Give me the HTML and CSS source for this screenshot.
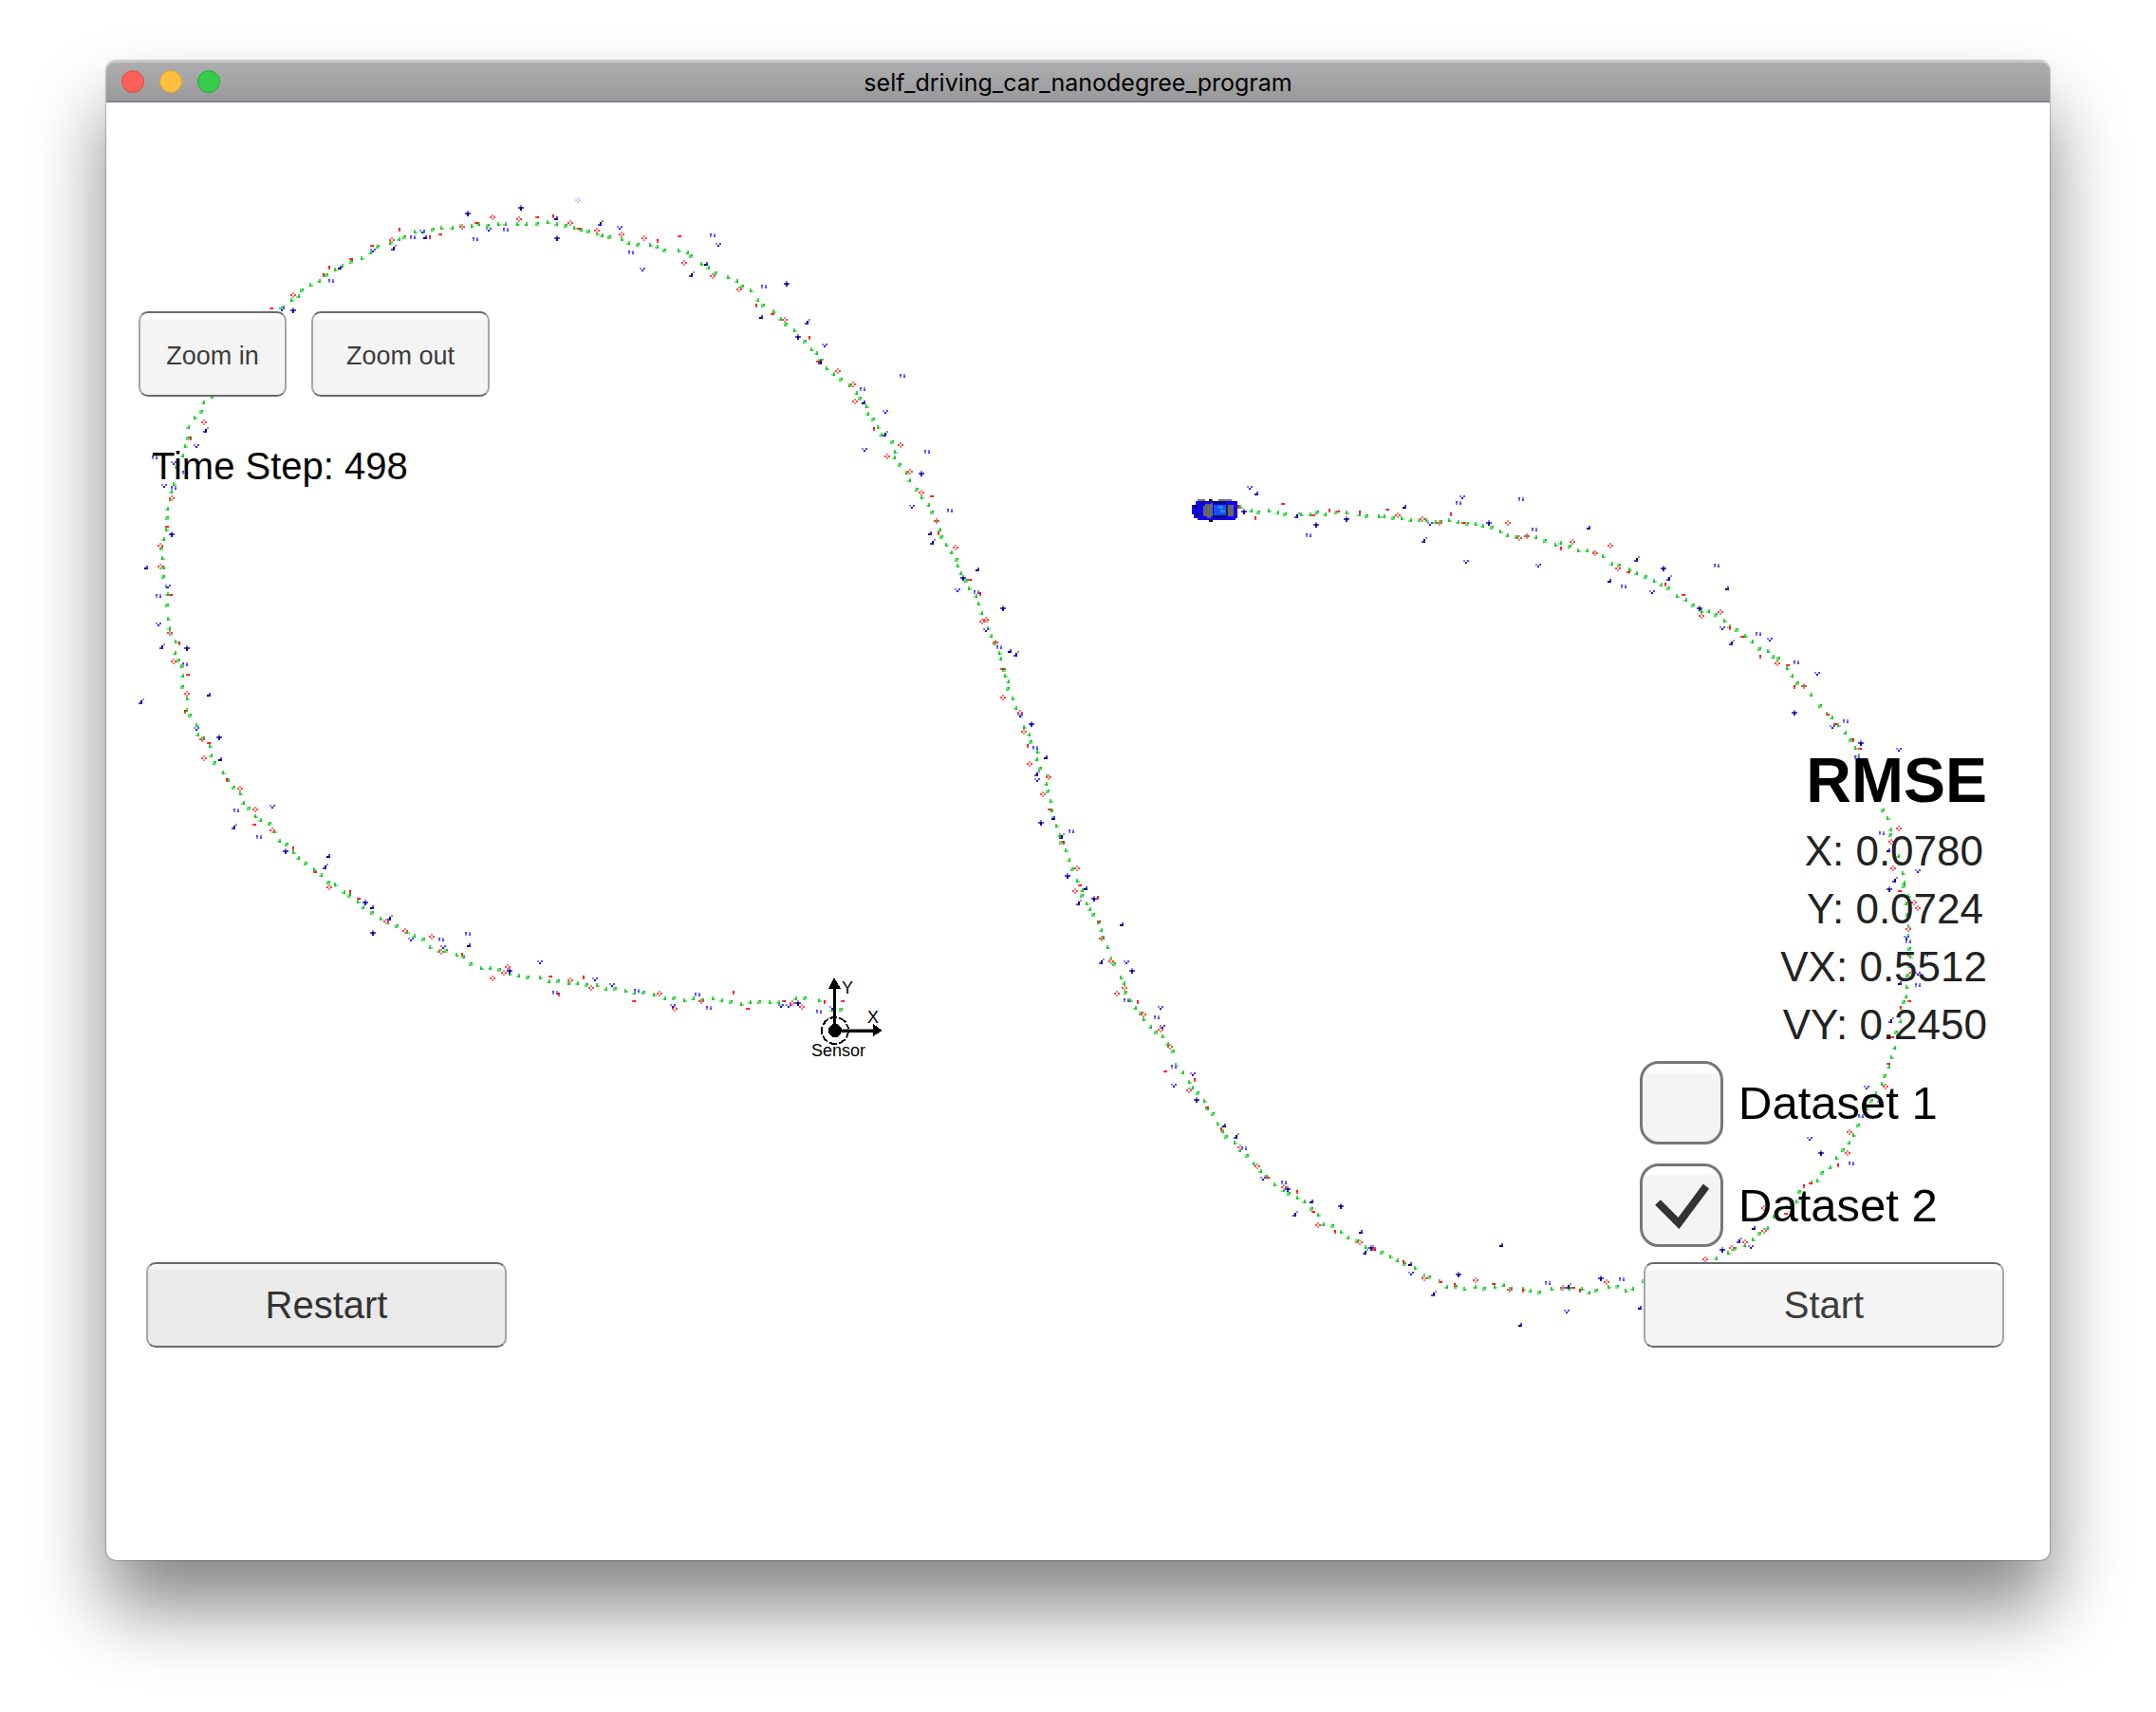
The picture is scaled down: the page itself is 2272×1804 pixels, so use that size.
FILE: index.html
```html
<!DOCTYPE html>
<html lang="en">
<head>
<meta charset="utf-8">
<meta name="viewport" content="width=device-width, initial-scale=1">
<title>self_driving_car_nanodegree_program</title>
<link rel="stylesheet" href="styles.css">
</head>
<body>
<main class="window">
  <header class="titlebar">
    <div class="lights">
      <button class="light light-close" type="button" aria-label="Close"></button>
      <button class="light light-minimize" type="button" aria-label="Minimize"></button>
      <button class="light light-zoom" type="button" aria-label="Full screen"></button>
    </div>
    <h1 class="title">self_driving_car_nanodegree_program</h1>
  </header>

  <section class="stage">
    <svg class="scene" viewBox="112 108 2048 1536" shape-rendering="crispEdges" aria-hidden="true">
      <g id="trace"></g>
      <g class="car">
        <path fill="#777" d="M1262 526h8v2h-8zM1274 526h4v2h-4zM1284 526h14v2h-14zM1262 546h14v2h-14zM1282 546h16v2h-16z"/>
        <path fill="#111" d="M1274 526h3v2h-3zM1274 548h4v2h-4zM1260 528h4v2h-4z"/>
        <path fill="#1005ee" d="M1260 528h44v18h-2v2h-40v-2h-4v-4h-2v-10h4z"/>
        <path fill="#0a0a80" d="M1258 532h4v4h-4zM1260 540h4v4h-4zM1266 528h4v3h-4zM1278 528h14v3h-14zM1278 543h14v3h-14z"/>
        <path fill="#666" d="M1270 531h6v-1h2v14h-2v2h-4v-2h-4v-11h2z"/>
        <path fill="#1450ff" d="M1279 532h13v11h-13z"/>
        <path fill="#2a86ff" d="M1283 533h6v3h-6zM1286 537h5v3h-5z"/>
        <path fill="#667" d="M1294 532h6v12h-6z"/>
        <path fill="#223" d="M1292 532h2v12h-2z"/>
      </g>
      <g class="sensor">
        <circle cx="880" cy="1086" r="14" fill="none" stroke="#000" stroke-width="2" stroke-dasharray="8 2"/>
        <circle cx="880" cy="1086" r="7"/>
        <path d="M878 1040h3v46h-3zM886 1085h36v3h-36zM873 1042l6-12 7 12zM920 1079l10 7-10 6z"/>
        <path fill="#888" d="M888 1084h32v1h-32z"/>
        <text x="887" y="1047">Y</text>
        <text x="914" y="1078">X</text>
        <text x="855" y="1113">Sensor</text>
      </g>
    </svg>

    <div class="side side-left">
      <div class="zoom">
        <button class="btn btn-zoom" type="button">Zoom in</button>
        <button class="btn btn-zoom btn-zoom-out" type="button">Zoom out</button>
      </div>
      <p class="step">Time Step: 498</p>
      <button class="btn btn-main btn-restart" type="button">Restart</button>
    </div>

    <div class="side side-right">
      <section class="rmse">
        <h2 class="rmse-title">RMSE</h2>
        <p class="rmse-row rmse-pos">X: 0.0780</p>
        <p class="rmse-row rmse-pos">Y: 0.0724</p>
        <p class="rmse-row">VX: 0.5512</p>
        <p class="rmse-row">VY: 0.2450</p>
      </section>
      <div class="datasets">
        <label class="choice">
          <span class="tick"><input class="box" type="checkbox"></span>
          Dataset 1
        </label>
        <label class="choice">
          <span class="tick">
            <input class="box" type="checkbox" checked>
            <svg class="mark" viewBox="0 0 88 88" aria-hidden="true"><path d="M19 41L41 63L70 24"/></svg>
          </span>
          Dataset 2
        </label>
      </div>
      <button class="btn btn-main" type="button">Start</button>
    </div>
  </section>
</main>
<script src="trace.js"></script>
</body>
</html>
```
FILE: styles.css
```css
* { box-sizing: border-box; }

body {
  margin: 0;
  padding: 64px 112px 160px;
  background: #fff;
  color: #000;
  font-family: "Liberation Sans", Arial, sans-serif;
}

.window {
  border-radius: 10px;
  background: #fff;
  box-shadow: 0 0 2px rgba(0, 0, 0, .7), 0 50px 80px rgba(0, 0, 0, .48);
}

.titlebar {
  display: grid;
  grid-template-columns: 1fr auto 1fr;
  align-items: center;
  height: 44px;
  padding: 0 16px;
  border-top: 2px solid #c9c9cb;
  border-bottom: 2px solid #868488;
  border-radius: 10px 10px 0 0;
  background: linear-gradient(#adadaf, #9a9a9c);
}

.lights { display: flex; gap: 16px; }

.light {
  width: 24px;
  height: 24px;
  padding: 0;
  border: 1px solid;
  border-radius: 50%;
}
.light-close { background: #ff5f5a; border-color: #e04842; }
.light-minimize { background: #ffbf40; border-color: #e0a02c; }
.light-zoom { background: #35cb4b; border-color: #22ac36; }

.title {
  margin: 0;
  padding-top: 2px;
  font: 400 25px/32px Inter, sans-serif;
}

.stage {
  position: relative;
  display: flex;
  justify-content: space-between;
  aspect-ratio: 4 / 3;
  padding: 220px 48px 224px 34px;
}

.scene {
  position: absolute;
  inset: 0;
  width: 100%;
  height: 100%;
}
.sensor { font-size: 18px; }

.side {
  position: relative;
  display: flex;
  flex-direction: column;
}

.zoom { display: flex; gap: 26px; }

.btn {
  height: 90px;
  padding: 0;
  border: 2px solid #6a6a6a;
  border-left-color: #a6a6a6;
  border-right-color: #a6a6a6;
  border-radius: 10px;
  background: linear-gradient(#fff 4px, #f4f4f4 8px);
  color: #3c3c3c;
  font-family: inherit;
  font-size: 40px;
}
.btn-zoom {
  width: 156px;
  padding-top: 4px;
  font-size: 27px;
}
.btn-zoom-out { width: 188px; }
.btn-main { width: 380px; }
.btn-restart {
  margin: auto 0 0 8px;
  background: linear-gradient(#f6f6f6 4px, #eaeaea 8px);
  color: #333;
}

.step {
  margin: 50px 0 0 14px;
  font-size: 40px;
  line-height: 46px;
}

.side-right {
  width: 384px;
  justify-content: flex-end;
  align-items: flex-end;
}

.rmse {
  padding-right: 18px;
  margin-bottom: 8px;
  color: #222;
  text-align: right;
}
.rmse-title {
  margin: 0;
  color: #000;
  font-size: 66px;
  line-height: 88px;
}
.rmse-row {
  margin: 0;
  font-size: 44px;
  line-height: 61px;
}
.rmse-pos { padding-right: 4px; }

.datasets {
  display: flex;
  flex-direction: column;
  gap: 20px;
  width: 100%;
  margin-bottom: 16px;
}
.choice {
  display: flex;
  align-items: center;
  gap: 16px;
  font-size: 49px;
}
.tick { display: grid; width: 88px; height: 88px; }
.box, .mark { grid-area: 1 / 1; width: 88px; height: 88px; }
.box {
  appearance: none;
  margin: 0;
  border: 3px solid #777;
  border-radius: 20px;
  background: linear-gradient(#fff 6px, #f4f4f4 12px);
}
.mark {
  z-index: 1;
  fill: none;
  stroke: #333;
  stroke-width: 8;
  pointer-events: none;
}
```
FILE: trace.js
```js
const sections = [
  { o: [100, 50], s: [3, 3],
    est: "366,1106 345,1126 336,1152 315,1175 297,1205 295,1237 285,1260 276,1290 262,1330 250,1380 240,1405 597,825 622,802 642,786 657,772 680,755 709,738 735,720 757,706 783,694 811,678 840,666 871,648 898,634 930,618 962,608 983,600 1012,586 1038,582 1070,576 1095,574 1128,570 1158,568 1188,564 1215,562 1247,564 1272,558 1300,560",
    ring: "624,780 345,1184 1163,566 1256,535 938,606", red: "563,825 720,722 815,668 741,698 879,628 962,578 1092,591 1058,603 1209,556 303,1240",
    dark: "627,831 771,699 945,630 1181,526 1043,600 348,1206", blue: "592,824 744,735 877,640 1002,597 1037,578 1202,604 1247,572 1296,570 323,1256 188,1294 250,1310 282,1340 218,1382 251,1386" },
  { o: [100, 520], s: [3, 3],
    est: "237,18 232,52 228,82 224,114 218,148 214,175 215,208 216,238 220,268 224,298 229,323 232,354 230,398 234,426 240,444 254,472 252,504 264,528 274,550 281,580 280,617 288,650 293,684 300,707 318,735 329,762 342,776 360,798 371,829 382,857 404,886 423,908 443,930 458,948 472,978 490,998 505,1020 525,1037 552,1046 566,1070 587,1098 608,1112 624,1134 647,1152 668,1174 695,1192 714,1211 738,1232 760,1241 787,1260 805,1277 829,1290 851,1313 877,1326 900,1349 929,1356 956,1370 984,1386 1010,1403 1038,1415 1061,1434 1086,1446 1112,1450 1143,1460 1165,1468 1190,1488",
    ring: "245,12 207,164 204,231 237,442 249,531 290,633 340,776 345,837 459,935 506,998 558,1065 922,1353 981,1380 1066,1403 1092,1450 1304,1498 740,1243", red: "231,102 269,477 299,573 284,693 362,786 418,909 507,1049 628,1125 698,1195 804,1264 838,1281 1161,1462 243,321",
    dark: "245,129 156,239 210,483 288,489 356,638 145,656 390,769 394,843 441,1053 600,1131 732,1149 726,1178 857,1293 873,1312 935,1341 876,1390", blue: "232,291 201,323 198,410 285,537 320,738 447,1001 561,984 520,1085 997,1408 1093,1409 1101,1431 1181,1390" },
  { o: [0, 0], s: [0.69, 0.69],
    est: "350,704 357,705 364,706 371,709 378,710 385,711 392,712 399,714 406,714 413,715 420,716 427,717 434,717 441,719 448,720 455,721 462,722 469,723 476,724 483,726 490,726 497,728 504,726 511,728 518,727 525,728 532,730 539,731 546,730 553,730 560,729 567,730",
    ring: "367,707 358,711 415,713 480,722 491,733 510,728 430,718", red: "401,710 424,712 461,728 534,723 545,733 406,724",
    dark: "370,706 340,688", blue: "393,699 404,721 445,716 463,719 489,731 507,723 433,711 516,732 568,731" },
  { o: [820, 1010], s: [3, 3],
    est: "0,146 57,130 84,131 128,137 170,162 203,167", ring: "42,142 75,150", red: "20,137 144,141 204,135", dark: "65,141", blue: "30,144 130,163 168,150" },
  { o: [540, 190], s: [3, 3],
    est: "15,138 42,138 79,138 111,136 138,140 168,147 192,150 221,156 240,167 265,168 284,178 311,185 342,186 366,198 401,204 432,209 460,215 485,226 523,222 554,232 569,245 594,264 621,281 646,294 680,311 709,320 727,337 753,353 774,378 796,397 823,414 847,438 868,456 889,478 905,497 928,515 947,534 965,551 975,573 995,594 1019,614 1041,634 1067,653 1091,672 1101,693 1117,714 1127,738 1143,760 1155,783 1168,808 1200,833 1211,858 1211,880 1229,900 1247,924 1259,949 1280,978 1292,1003 1315,1026 1329,1053 1343,1078 1355,1108 1357,1132 1368,1153 1386,1177 1404,1203 1409,1218 1421,1243 1437,1267 1445,1294 1464,1318",
    ring: "21,122 183,134 266,158 345,171 417,182 543,260 632,302 717,343 862,440 1029,604 1076,644 1083,699 1227,836 1184,873 1254,922 1294,985 1400,1161 1343,1075", red: "81,118 129,117 215,155 456,195 533,177 773,399 827,423 939,502 967,572 1143,788 1328,999 1347,1121 1448,1265 1479,1312",
    dark: "27,84 135,124 278,133 142,185 608,265 568,299 868,328 783,433 935,448 903,497 1107,706 1179,799 1293,927 1317,1119 1331,1140 1424,1256 1467,1233 972,572", blue: "336,148 372,225 409,280 634,172 653,201 795,333 987,517 1107,656 1180,727 1230,615 1113,848 1308,855 1265,1028 1383,1040 1407,1291 1464,1299", faint: "204,65" },
  { o: [960, 620], s: [3, 2.613],
    est: "210,46 225,72 240,94 245,112 254,132 264,154 277,178 282,198 296,225 299,241 306,257 309,280 320,305 333,330 348,353 359,383 374,406 381,428 396,454 398,475 413,498 427,521 429,543 434,564 442,590 448,612 452,634 459,655 468,680 477,704 486,722 499,752 514,777 527,807 541,831 545,851 555,871 567,886 579,902 591,922 602,944 611,966 621,990 631,1020 645,1038 660,1072 674,1090 683,1114 695,1136 709,1155 727,1174 736,1191 761,1210 779,1224 795,1237 815,1258 831,1279 839,1312 860,1335",
    ring: "225,91 239,88 266,148 291,300 342,341 356,395 374,483 434,520 417,566 525,771 519,833 602,963 633,1025 677,1099 651,1115 735,1172 791,1215 816,1260", red: "293,224 369,436 441,609 485,703 536,818 591,857 597,918 717,1142 807,1332 894,1357",
    dark: "290,57 306,175 331,181 378,374 423,468 396,510 409,643 446,635 474,682 495,790 551,829 533,865 580,855 660,929 600,1027 697,1052", blue: "236,112 279,161 342,346 393,437 398,527 508,666 680,1028 680,1131 789,1152 779,1178 795,1202 832,1314 890,1335" },
  { o: [1220, 1140], s: [3, 3],
    est: "99,2 113,18 126,41 145,60 161,84 176,104 191,136 204,158 219,178 242,196 263,217 283,234 305,262 324,282 347,304 370,326 396,342 419,359 443,370 466,383 487,407 509,423 525,450 555,460 576,479 605,492 633,508 658,524 686,532 713,545 732,554 760,565 785,578 815,590 842,613 863,622 890,634 914,648 943,653 968,659 1002,649 1037,654 1066,652 1096,647 1121,656 1155,655 1181,660 1206,667 1245,658 1278,657 1307,655 1341,659 1362,667 1391,662 1422,653 1454,648",
    ring: "99,29 263,208 314,267 396,330 508,454 637,508 682,524 845,620 1005,626 1112,656 1282,651 1418,632", red: "156,81 203,150 349,302 441,353 494,413 560,477 689,531 777,573 896,633 941,645 1065,640 1156,660 1319,651 1336,663",
    dark: "122,59 206,140 246,168 410,338 484,380 434,415 577,392 636,478 656,538 674,522 792,578 872,669 948,606 1085,520 1297,643 1400,621 1145,772", blue: "51,11 272,204 333,302 399,317 800,600 1233,633 1290,723" },
  { o: [1700, 1100], s: [3, 3],
    est: "881,45 873,72 861,105 850,131 831,157 817,182 800,204 788,231 779,259 761,288 746,315 729,341 707,365 689,390 663,411 642,433 624,443 590,472 576,498 550,518 530,527 508,546 487,582 467,600 438,619 414,636 386,652 360,660 329,683 12,769 36,784 63,775 99,750",
    ring: "859,133 747,276 741,342 477,592 414,626 375,645 291,681 475,518", red: "874,64 713,387 626,443 604,454 549,534 775,229",
    dark: "655,347 443,584 396,622 346,651 80,834", blue: "800,134 780,222 621,297 753,376 432,640 27,738 843,183" },
  { o: [1700, 760], s: [3, 3],
    est: "711,12 732,38 750,62 764,87 776,113 808,179 817,198 826,228 852,282 864,311 877,342 879,365 887,396 901,430 907,455 916,480 918,510 923,527 930,555 929,578 932,612 930,650 934,679 937,720 936,747 936,775 933,808 929,843 927,873 918,890 913,920 908,953 899,986 895,1000 891,1034",
    ring: "904,340 879,381 884,464 965,591 948,571 930,658 945,795", red: "704,9 759,65 783,84 813,188 906,537 933,741 941,885 909,909 884,1001",
    dark: "783,69 867,410 890,503 871,530 902,828 877,942 778,237", blue: "691,14 768,108 903,89 849,353 963,473 933,692 927,681 987,732 962,795 963,830 819,998" },
  { o: [1380, 500], s: [2.529, 3],
    est: "20,124 45,126 72,124 97,125 132,131 154,132 183,137 202,137 224,138 245,143 271,148 297,148 311,146 335,150 350,152 372,148 395,155 420,161 443,160 465,167 486,171 510,181 531,192 556,199 577,197 602,201 630,212 653,222 670,220 696,231 718,244 742,245 762,250 783,259 805,282 826,292 850,303 870,312 896,326 916,340 938,350 958,365 981,384 1004,397 1026,418 1045,433 1065,436 1084,446 1104,464 1122,484 1141,497 1159,514 1183,533 1203,552 1219,562 1238,577 1251,584 1270,612 1287,636 1301,660 1319,671 1336,696 1361,733 1379,756 1391,773",
    ring: "237,130 303,143 349,152 477,155 531,152 559,203 578,194 700,214 761,249 801,223 824,297 1044,447 1095,435 1246,596 1316,667", red: "14,128 53,119 76,118 134,125 211,111 376,131 414,153 671,234 850,308 948,352 1001,381 1121,489 1157,510 1201,576 1277,603 1292,675 1385,759",
    dark: "101,142 252,106 305,209 480,153 743,168 872,269 942,299 797,339 957,327 1040,423 1112,362 1123,532 1290,752", blue: "320,153 396,87 408,67 564,77 415,272 598,170 609,282 837,348 911,369 1085,282 1100,483 1197,501 1228,519 1295,590 1353,624 1428,774" },
  { o: [1240, 500], s: [3, 3],
    est: "202,106 235,115 263,120 290,117 319,120 344,127 393,127 421,129 446,122", red: "339,94 247,138 436,128 197,102", dark: "215,115 246,60 378,131 438,157", blue: "229,40 417,188" }
];

// Each mark is a few cells of a 2-unit grid: [column, row, colour].
// Kinds with several shapes cycle through them.
const glyphs = {
  est: [
    [[0, -1, "#41d94f"], [0, 0, "#00c814"], [1, 0, "#80e489"]],
    [[0, -1, "#41d94f"], [0, 0, "#00c814"], [-1, 0, "#80e489"]],
    [[0, -1, "#00c814"], [-1, -1, "#80e489"], [0, 0, "#80e489"], [-1, 0, "#41d94f"]]
  ],
  ring: [[[0, -1, "#ff8080"], [-1, 0, "#ff4040"], [1, 0, "#ff4040"], [0, 1, "#ff8080"]]],
  red: [
    [[-1, 0, "#ff4040"], [0, 0, "#ff0000"]],
    [[0, -1, "#ff0000"], [0, 0, "#ff4040"]]
  ],
  dark: [
    [[0, 0, "#000000"], [-1, 0, "#5040ff"], [1, 0, "#5040ff"], [0, -1, "#8a80ff"], [0, 1, "#1400ff"]],
    [[0, 0, "#000000"], [1, 0, "#1400ff"], [1, -1, "#5040ff"]],
    [[0, 0, "#000000"], [0, 1, "#1400ff"], [-1, 1, "#5040ff"], [1, -1, "#8a80ff"]]
  ],
  blue: [
    [[-1, 0, "#8a80ff"], [1, 0, "#5040ff"], [0, 1, "#1400ff"]],
    [[-1, 0, "#5040ff"], [-1, 1, "#8a80ff"], [1, 0, "#8a80ff"], [1, 1, "#5040ff"]]
  ],
  faint: [[[-1, 0, "#c8c0ff"], [0, -1, "#c8c0ff"], [1, 0, "#c8c0ff"], [0, 1, "#c8c0ff"]]]
};

const cells = {};
for (const section of sections) {
  for (const [kind, shapes] of Object.entries(glyphs)) {
    const pairs = (section[kind] || "").split(" ").filter(Boolean);
    pairs.forEach((pair, n) => {
      const at = pair.split(",").map((v, i) =>
        Math.floor((section.o[i] + v / section.s[i]) / 2) * 2);
      for (const [dx, dy, colour] of shapes[n % shapes.length]) {
        cells[colour] = (cells[colour] || "") +
          `M${at[0] + dx * 2} ${at[1] + dy * 2}h2v2h-2z`;
      }
    });
  }
}

const trace = document.getElementById("trace");
for (const [colour, d] of Object.entries(cells)) {
  const path = document.createElementNS("http://www.w3.org/2000/svg", "path");
  path.setAttribute("fill", colour);
  path.setAttribute("d", d);
  trace.append(path);
}
```
